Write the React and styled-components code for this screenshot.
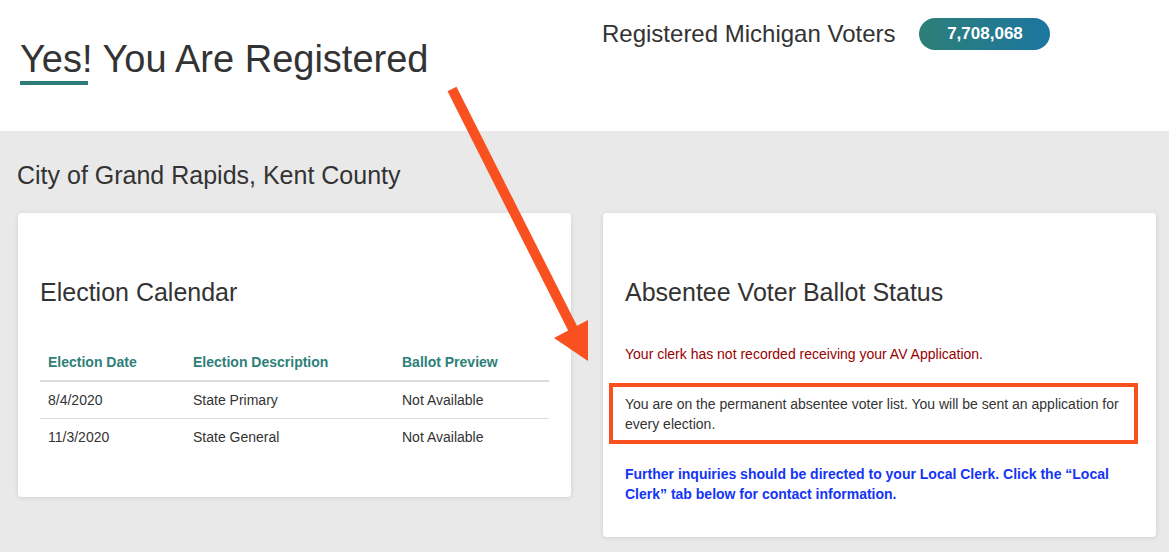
import React from "react";
import styled, { createGlobalStyle } from "styled-components";

const GlobalStyle = createGlobalStyle`
  body {
    margin: 0;
    font-family: "Liberation Sans", Arial, sans-serif;
    color: #333;
    background: #e9e9e9;
  }
`;

const Page = styled.div`
  position: relative;
  width: 1169px;
  height: 552px;
  overflow: hidden;
`;

const Header = styled.header`
  display: grid;
  grid-template-columns: 553px 553px;
  column-gap: 32px;
  padding: 0 13px 0 18px;
  height: 131px;
  background: #fff;
`;

const TitleBlock = styled.div`
  padding-top: 37px;
  padding-left: 2px;
`;

const Title = styled.h1`
  margin: 0;
  font-size: 38px;
  line-height: 44px;
  font-weight: normal;
  color: #333;
  white-space: nowrap;
`;

const Underline = styled.div`
  width: 68px;
  height: 4px;
  background: #2e7d78;
`;

const Counter = styled.div`
  display: flex;
  align-items: center;
  gap: 24px;
  margin-top: 18px;
  height: 32px;
  margin-left: -1px;
`;

const CounterLabel = styled.span`
  font-size: 24px;
  line-height: 32px;
  color: #333;
`;

const Badge = styled.span`
  display: inline-flex;
  align-items: center;
  justify-content: center;
  width: 131px;
  height: 32px;
  border-radius: 16px;
  background: linear-gradient(90deg, #2e7f78 0%, #1b76a0 100%);
  color: #fff;
  font-size: 17px;
  font-weight: bold;
`;

const Section = styled.section`
  padding: 29px 13px 0 17px;
`;

const Place = styled.h2`
  margin: 0 0 23px;
  font-size: 25px;
  line-height: 30px;
  font-weight: normal;
`;

const Cards = styled.div`
  display: flex;
  align-items: flex-start;
  gap: 32px;
  padding-left: 1px;
`;

const Card = styled.div`
  width: 553px;
  box-sizing: border-box;
  background: #fff;
  border-radius: 4px;
  box-shadow: 0 1px 5px rgba(0, 0, 0, 0.1);
  padding: 64px 22px ${(p) => p.$bottom}px;
`;

const CardTitle = styled.h3`
  margin: 0;
  font-size: 25px;
  line-height: 30px;
  font-weight: normal;
  color: #333;
`;

const Table = styled.table`
  width: 100%;
  table-layout: fixed;
  margin-top: 37px;
  border-collapse: collapse;
  font-size: 14px;
  line-height: 20px;
`;

const Th = styled.th`
  text-align: left;
  padding: 8px 8px;
  color: #2d7f79;
  font-weight: bold;
  border-bottom: 2px solid #dcdcdc;
  width: ${(p) => p.$w}px;
  box-sizing: border-box;
`;

const Td = styled.td`
  padding: 8px 8px;
  color: #333;
  border-top: ${(p) => (p.$line ? "1px solid #dcdcdc" : "none")};
`;

const Note = styled.p`
  margin: ${(p) => p.$top}px 0 0;
  font-size: 14px;
  line-height: 20px;
  color: ${(p) => p.$color || "#333"};
  font-weight: ${(p) => (p.$bold ? "bold" : "normal")};
`;

const Highlight = styled.div`
  margin: 19px -4px 0 -16px;
  padding: 7px 4px 6px 12px;
  border: 4px solid #f8501f;
  font-size: 14px;
  line-height: 20px;
  color: #333;
`;

const Arrow = styled.svg`
  position: absolute;
  left: 0;
  top: 0;
  pointer-events: none;
`;

const elections = [
  { date: "8/4/2020", desc: "State Primary", preview: "Not Available" },
  { date: "11/3/2020", desc: "State General", preview: "Not Available" },
];

export default function App() {
  return (
    <Page>
      <GlobalStyle />
      <Header>
        <TitleBlock>
          <Title>Yes! You Are Registered</Title>
          <Underline />
        </TitleBlock>
        <Counter>
          <CounterLabel>Registered Michigan Voters</CounterLabel>
          <Badge>7,708,068</Badge>
        </Counter>
      </Header>
      <Section>
        <Place>City of Grand Rapids, Kent County</Place>
        <Cards>
          <Card $bottom={42}>
            <CardTitle>Election Calendar</CardTitle>
            <Table>
              <thead>
                <tr>
                  <Th $w={145}>Election Date</Th>
                  <Th $w={209}>Election Description</Th>
                  <Th $w={155}>Ballot Preview</Th>
                </tr>
              </thead>
              <tbody>
                {elections.map((e, i) => (
                  <tr key={e.date}>
                    <Td $line={i > 0}>{e.date}</Td>
                    <Td $line={i > 0}>{e.desc}</Td>
                    <Td $line={i > 0}>{e.preview}</Td>
                  </tr>
                ))}
              </tbody>
            </Table>
          </Card>
          <Card $bottom={33}>
            <CardTitle>Absentee Voter Ballot Status</CardTitle>
            <Note $top={37} $color="#990000">
              Your clerk has not recorded receiving your AV Application.
            </Note>
            <Highlight>
              You are on the permanent absentee voter list. You will be sent an
              application for every election.
            </Highlight>
            <Note $top={20} $color="#1434f5" $bold>
              Further inquiries should be directed to your Local Clerk. Click the
              “Local Clerk” tab below for contact information.
            </Note>
          </Card>
        </Cards>
      </Section>
      <Arrow width="1169" height="552" viewBox="0 0 1169 552">
        <line x1="452" y1="89" x2="574" y2="331" stroke="#f8501f" strokeWidth="10" />
        <polygon points="588,361 554,338 588,320" fill="#f8501f" />
      </Arrow>
    </Page>
  );
}
